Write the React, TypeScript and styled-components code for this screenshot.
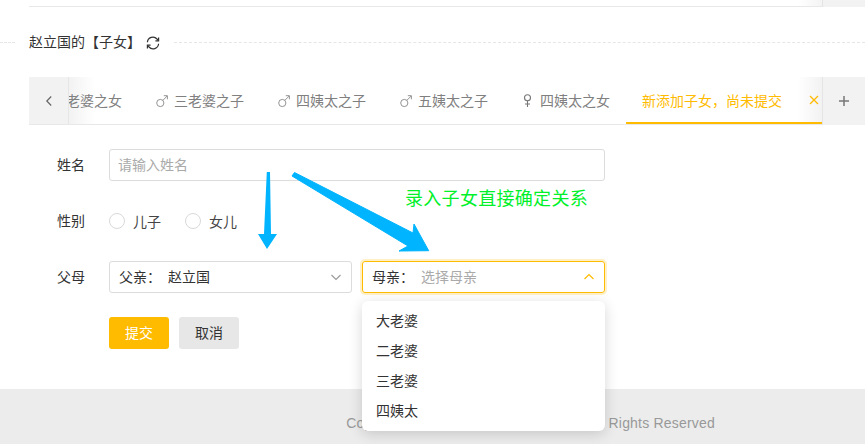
import React from "react";
import styled, { createGlobalStyle } from "styled-components";

const Global = createGlobalStyle`
  html, body { margin: 0; padding: 0; background: #fff; overflow: hidden; }
  body { font-family: "Noto Sans CJK SC", "Noto Sans", sans-serif; font-size: 14px; color: #333; }
  * { box-sizing: border-box; }
`;

const Page = styled.div`
  position: relative;
  width: 865px;
  height: 444px;
  overflow: hidden;
  display: flex;
  flex-direction: column;
`;

const TableEnd = styled.div`
  display: flex;
  height: 7px;
  padding-left: 29px;
  flex: none;
`;
const TableBody = styled.div`
  flex: 1;
  border-bottom: 1px solid #e8e8e8;
  background: linear-gradient(to right, #fff 0, #fff calc(100% - 24px), #f4f4f4 100%);
`;
const TableFixed = styled.div`
  width: 43px;
  background: #f2f2f2;
  border-left: 1px solid #e4e4e4;
`;

const Divider = styled.div`
  height: 70px;
  flex: none;
  display: flex;
  align-items: center;
  &::before, &::after {
    content: "";
    border-top: 1px dashed #e6e6e6;
  }
  &::before { width: 15px; }
  &::after { flex: 1; }
`;
const DividerTitle = styled.div`
  display: flex;
  align-items: center;
  gap: 10px;
  padding: 0 14px;
  line-height: 20px;
  color: #333;
`;
const TitleText = styled.span`
  width: 107px;
  white-space: nowrap;
  padding-bottom: 2px;
`;
const RefreshIcon = styled.svg`
  width: 14px;
  height: 14px;
  margin-top: 2px;
  flex: none;
`;

const TabStrip = styled.div`
  position: relative;
  flex: none;
  height: 48px;
  margin-left: 29px;
  display: flex;
  border-bottom: 1px solid #e8e8e8;
  background:
    linear-gradient(to right, #f2f2f2, #fff) 40px 0 / 26px 100% no-repeat,
    linear-gradient(to left, #f2f2f2, #fff) calc(100% - 43px) 0 / 24px 100% no-repeat,
    #fff;
`;
const TabViewport = styled.div`
  flex: 1;
  min-width: 0;
  overflow: hidden;
  display: flex;
`;
const TabList = styled.div`
  display: flex;
  margin-left: -13px;
  height: 48px;
`;
const Tab = styled.div`
  flex: none;
  height: 47px;
  padding: 0 16px 2px;
  display: flex;
  align-items: center;
  white-space: nowrap;
  color: #808080;
`;
const ActiveTab = styled.div`
  flex: none;
  width: 196px;
  height: 48px;
  padding: 0 2px 0 16px;
  display: flex;
  align-items: center;
  justify-content: space-between;
  color: #ffbb00;
  white-space: nowrap;
  border-bottom: 3px solid #ffbb00;
  border-radius: 0 0 2px 2px;
`;
const TabIcon = styled.svg`
  width: 20px;
  height: 16px;
  flex: none;
  margin-top: 2px;
`;
const ScrollButton = styled.div`
  position: absolute;
  left: 0;
  top: 0;
  width: 40px;
  height: 47px;
  background: #f2f2f2;
  border-right: 1px solid #e6e6e6;
  display: flex;
  align-items: center;
  justify-content: center;
`;
const AddButton = styled.div`
  flex: none;
  width: 43px;
  height: 48px;
  background: #f2f2f2;
  border-left: 1px solid #e4e4e4;
  display: flex;
  align-items: center;
  justify-content: center;
`;

const Form = styled.div`
  flex: none;
  padding: 24px 0 40px 57px;
  width: 605px;
  display: flex;
  flex-direction: column;
  gap: 24px;
`;
const Row = styled.div`
  display: flex;
  align-items: center;
  height: 32px;
`;
const Label = styled.div`
  width: 52px;
  flex: none;
  color: #333;
  padding-bottom: 2px;
`;
const TextInput = styled.div`
  flex: 1;
  height: 32px;
  border: 1px solid #dcdcdc;
  border-radius: 3px;
  padding: 0 8px 2px;
  display: flex;
  align-items: center;
  color: #aaa;
`;
const RadioGroup = styled.div`
  display: flex;
  gap: 24px;
`;
const RadioItem = styled.div`
  display: flex;
  align-items: center;
  gap: 8px;
  color: #444;
  line-height: 20px;
`;
const RadioCircle = styled.span`
  width: 16px;
  height: 16px;
  border: 1px solid #d9d9d9;
  border-radius: 50%;
  background: #fff;
`;
const SelectPair = styled.div`
  flex: 1;
  display: flex;
  gap: 10px;
`;
const SelectBox = styled.div<{ $open?: boolean }>`
  position: relative;
  flex: 1;
  height: 32px;
  padding: 0 9px;
  display: flex;
  align-items: center;
  border-radius: 3px;
  border: 1px solid ${(p) => (p.$open ? "#ffbb00" : "#dcdcdc")};
  box-shadow: ${(p) => (p.$open ? "0 0 0 2px rgba(255,187,0,.22)" : "none")};
  color: #333;
`;
const SelectPrefix = styled.span`
  width: 49px;
  flex: none;
  padding-bottom: 2px;
`;
const SelectValue = styled.span<{ $placeholder?: boolean }>`
  flex: 1;
  padding-bottom: 2px;
  color: ${(p) => (p.$placeholder ? "#aaa" : "#333")};
`;
const Dropdown = styled.div`
  position: absolute;
  left: -1px;
  top: 39px;
  width: 243px;
  height: 130px;
  padding: 4px 0 6px;
  background: #fff;
  border-radius: 6px;
  box-shadow: 0 3px 14px rgba(0, 0, 0, 0.16);
  z-index: 3;
`;
const Option = styled.div`
  height: 30px;
  line-height: 30px;
  padding-left: 14px;
  color: #333;
`;
const Buttons = styled.div`
  display: flex;
  gap: 10px;
  padding-left: 52px;
`;
const Button = styled.div<{ $primary?: boolean }>`
  width: 60px;
  height: 32px;
  border-radius: 3px;
  padding-bottom: 2px;
  display: flex;
  align-items: center;
  justify-content: center;
  background: ${(p) => (p.$primary ? "#ffbb00" : "#e7e7e7")};
  color: ${(p) => (p.$primary ? "#fff" : "#333")};
`;
const Footer = styled.div`
  flex: 1;
  background: #ececec;
  display: flex;
  align-items: center;
  justify-content: flex-end;
  padding: 12px 150px 0 0;
  color: #999;
  font-family: "Liberation Sans", Arial, sans-serif;
  font-size: 14px;
  letter-spacing: 0.2px;
  white-space: nowrap;
`;
const ArrowLayer = styled.svg`
  position: absolute;
  left: 0;
  top: 0;
  width: 865px;
  height: 444px;
  pointer-events: none;
  z-index: 2;
`;
const Annotation = styled.div`
  position: absolute;
  left: 405px;
  top: 184px;
  font-size: 18px;
  line-height: 26px;
  letter-spacing: 0.3px;
  color: #00f029;
  white-space: nowrap;
  z-index: 2;
`;

const Male = () => (
  <TabIcon viewBox="0 0 20 16" fill="none" stroke="#888" strokeWidth="0.9">
    <circle cx="6.3" cy="10" r="3.6" />
    <path d="M9 7.2 L13.2 3 M9.8 2.7 H13.4 V6.3" />
  </TabIcon>
);
const Female = () => (
  <TabIcon viewBox="0 0 20 16" fill="none" stroke="#777" strokeWidth="1.1">
    <circle cx="7.5" cy="4.8" r="3" />
    <path d="M7.5 7.8 V14 M5 11 H10" />
  </TabIcon>
);

const tabs: { female: boolean; text: string }[] = [
  { female: true, text: "二老婆之女" },
  { female: false, text: "三老婆之子" },
  { female: false, text: "四姨太之子" },
  { female: false, text: "五姨太之子" },
  { female: true, text: "四姨太之女" },
];

export default function App() {
  return (
    <Page>
      <Global />
      <TableEnd>
        <TableBody />
        <TableFixed />
      </TableEnd>
      <Divider>
        <DividerTitle>
          <TitleText>赵立国的【子女】</TitleText>
          <RefreshIcon viewBox="0 0 14 14" fill="none" stroke="#333" strokeWidth="1.2">
            <path d="M1.4 6.2 A5.5 5.5 0 0 1 11 3 L12.2 4.4" />
            <path d="M12.6 1.4 V4.8 H9.4" />
            <path d="M12.6 7.8 A5.5 5.5 0 0 1 3 11 L1.8 9.6" />
            <path d="M1.4 12.6 V9.2 H4.6" />
          </RefreshIcon>
        </DividerTitle>
      </Divider>
      <TabStrip>
        <TabViewport>
          <TabList>
            {tabs.map((t) => (
              <Tab key={t.text}>
                {t.female ? <Female /> : <Male />}
                {t.text}
              </Tab>
            ))}
            <ActiveTab>
              新添加子女，尚未提交
              <svg width="12" height="12" viewBox="0 0 12 12" fill="none" stroke="#ffbb00" strokeWidth="1.3">
                <path d="M2 2 L10 10 M10 2 L2 10" />
              </svg>
            </ActiveTab>
          </TabList>
        </TabViewport>
        <ScrollButton>
          <svg width="10" height="12" viewBox="0 0 10 12" fill="none" stroke="#666" strokeWidth="1.2">
            <path d="M7.2 1.5 L2.8 6 L7.2 10.5" />
          </svg>
        </ScrollButton>
        <AddButton>
          <svg width="12" height="12" viewBox="0 0 12 12" fill="none" stroke="#777" strokeWidth="1.5">
            <path d="M6 1 V11 M1 6 H11" />
          </svg>
        </AddButton>
      </TabStrip>
      <Form>
        <Row>
          <Label>姓名</Label>
          <TextInput>请输入姓名</TextInput>
        </Row>
        <Row>
          <Label>性别</Label>
          <RadioGroup>
            <RadioItem>
              <RadioCircle />
              儿子
            </RadioItem>
            <RadioItem>
              <RadioCircle />
              女儿
            </RadioItem>
          </RadioGroup>
        </Row>
        <Row>
          <Label>父母</Label>
          <SelectPair>
            <SelectBox>
              <SelectPrefix>父亲：</SelectPrefix>
              <SelectValue>赵立国</SelectValue>
              <svg width="12" height="12" viewBox="0 0 12 12" fill="none" stroke="#999" strokeWidth="1.1">
                <path d="M1.5 4 L6 8.5 L10.5 4" />
              </svg>
            </SelectBox>
            <SelectBox $open>
              <SelectPrefix>母亲：</SelectPrefix>
              <SelectValue $placeholder>选择母亲</SelectValue>
              <svg width="12" height="12" viewBox="0 0 12 12" fill="none" stroke="#ffbb00" strokeWidth="1.2">
                <path d="M1.5 8 L6 3.5 L10.5 8" />
              </svg>
              <Dropdown>
                <Option>大老婆</Option>
                <Option>二老婆</Option>
                <Option>三老婆</Option>
                <Option>四姨太</Option>
              </Dropdown>
            </SelectBox>
          </SelectPair>
        </Row>
        <Buttons>
          <Button $primary>提交</Button>
          <Button>取消</Button>
        </Buttons>
      </Form>
      <Footer>Copyright © 2018-2021 example.com All Rights Reserved</Footer>
      <ArrowLayer viewBox="0 0 865 444">
        <path d="M266.8 172 L270 172 L271 234 L277 234 L267 249 L258 234 L264 234 Z" fill="#00b4ff" />
        <path
          d="M292 176 L294.5 172.5 L413 233 L414 224 L428.7 250.7 L399 251 L408 246 Z"
          fill="#00b4ff"
          stroke="#00b4ff"
          strokeWidth="1"
          strokeLinejoin="round"
        />
      </ArrowLayer>
      <Annotation>录入子女直接确定关系</Annotation>
    </Page>
  );
}
